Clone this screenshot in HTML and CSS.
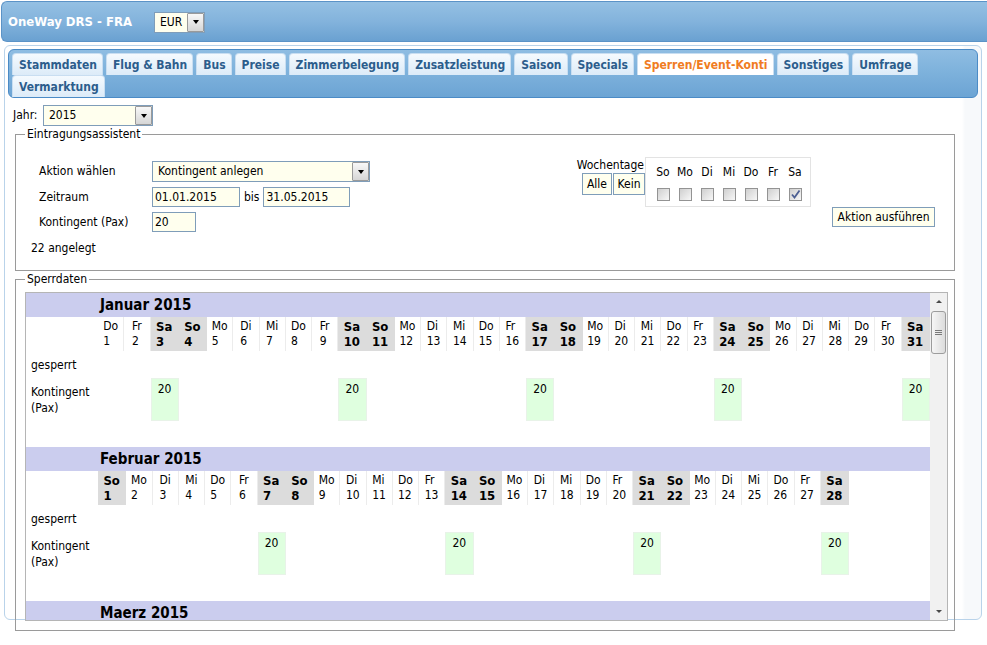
FILE: index.html
```html
<!DOCTYPE html>
<html lang="de">
<head>
<meta charset="utf-8">
<title>OneWay DRS - FRA</title>
<link rel="stylesheet" href="styles.css">
</head>
<body>
<header class="topbar">
  <span class="brand">OneWay DRS - FRA</span>
  <div class="select sel-eur"><span class="sel-val">EUR</span><span class="sel-btn"><i class="arrow"></i></span></div>
</header>
<main class="panel">
  <nav class="tabs">
    <a class="tab">Stammdaten</a>
    <a class="tab">Flug &amp; Bahn</a>
    <a class="tab">Bus</a>
    <a class="tab">Preise</a>
    <a class="tab">Zimmerbelegung</a>
    <a class="tab">Zusatzleistung</a>
    <a class="tab">Saison</a>
    <a class="tab">Specials</a>
    <a class="tab active">Sperren/Event-Konti</a>
    <a class="tab">Sonstiges</a>
    <a class="tab">Umfrage</a>
    <a class="tab">Vermarktung</a>
  </nav>

  <div class="year-row">
    <span class="year-lbl">Jahr:</span>
    <div class="select sel-year"><span class="sel-val">2015</span><span class="sel-btn"><i class="arrow"></i></span></div>
  </div>

  <fieldset class="box assistant">
    <legend>Eintragungsassistent</legend>
    <div class="assist-body">
      <div class="form">
        <span class="f-lbl">Aktion wählen</span>
        <div class="select sel-action"><span class="sel-val">Kontingent anlegen</span><span class="sel-btn"><i class="arrow"></i></span></div>
        <span class="f-lbl">Zeitraum</span>
        <div class="range">
          <span class="inp w-date">01.01.2015</span>
          <span>bis</span>
          <span class="inp w-date2">31.05.2015</span>
        </div>
        <span class="f-lbl">Kontingent (Pax)</span>
        <div><span class="inp w-pax">20</span></div>
      </div>
      <div class="assist-right">
        <div class="wd-lblcol">
          <span class="wd-title">Wochentage</span>
          <div class="wd-btns"><span class="btn b-alle">Alle</span><span class="btn b-kein">Kein</span></div>
        </div>
        <div class="wd-box">
          <span>So</span><span>Mo</span><span>Di</span><span>Mi</span><span>Do</span><span>Fr</span><span>Sa</span>
          <span class="cb"></span><span class="cb"></span><span class="cb"></span><span class="cb"></span><span class="cb"></span><span class="cb"></span>
          <span class="cb checked"><svg width="11" height="11" viewBox="0 0 11 11"><path d="M2 5.5 L4.5 8.5 L9.5 1.5" fill="none" stroke="#4b5e92" stroke-width="1.8"/></svg></span>
        </div>
        <span class="btn b-action">Aktion ausführen</span>
      </div>
    </div>
    <div class="count">22 angelegt</div>
  </fieldset>

  <fieldset class="box sperr">
    <legend>Sperrdaten</legend>
    <div class="scroller">
      <div class="months">
        <section class="month">
          <div class="month-title">Januar 2015</div>
          <div class="month-grid m-jan">
            <div class="lbl"></div>
            <div class="d">Do<br>1</div><div class="d">Fr<br>2</div><div class="d we">Sa<br>3</div><div class="d we">So<br>4</div>
            <div class="d">Mo<br>5</div><div class="d">Di<br>6</div><div class="d">Mi<br>7</div><div class="d">Do<br>8</div><div class="d">Fr<br>9</div>
            <div class="d we">Sa<br>10</div><div class="d we">So<br>11</div>
            <div class="d">Mo<br>12</div><div class="d">Di<br>13</div><div class="d">Mi<br>14</div><div class="d">Do<br>15</div><div class="d">Fr<br>16</div>
            <div class="d we">Sa<br>17</div><div class="d we">So<br>18</div>
            <div class="d">Mo<br>19</div><div class="d">Di<br>20</div><div class="d">Mi<br>21</div><div class="d">Do<br>22</div><div class="d">Fr<br>23</div>
            <div class="d we">Sa<br>24</div><div class="d we">So<br>25</div>
            <div class="d">Mo<br>26</div><div class="d">Di<br>27</div><div class="d">Mi<br>28</div><div class="d">Do<br>29</div><div class="d">Fr<br>30</div>
            <div class="d we">Sa<br>31</div>
            <div class="lbl">gesperrt</div>
            <div class="lbl">Kontingent (Pax)</div>
            <i></i><i></i><div class="k">20</div>
            <i></i><i></i><i></i><i></i><i></i><i></i><div class="k">20</div>
            <i></i><i></i><i></i><i></i><i></i><i></i><div class="k">20</div>
            <i></i><i></i><i></i><i></i><i></i><i></i><div class="k">20</div>
            <i></i><i></i><i></i><i></i><i></i><i></i><div class="k">20</div>
          </div>
        </section>
        <section class="month">
          <div class="month-title">Februar 2015</div>
          <div class="month-grid m-feb">
            <div class="lbl"></div>
            <div class="d we">So<br>1</div>
            <div class="d">Mo<br>2</div><div class="d">Di<br>3</div><div class="d">Mi<br>4</div><div class="d">Do<br>5</div><div class="d">Fr<br>6</div>
            <div class="d we">Sa<br>7</div><div class="d we">So<br>8</div>
            <div class="d">Mo<br>9</div><div class="d">Di<br>10</div><div class="d">Mi<br>11</div><div class="d">Do<br>12</div><div class="d">Fr<br>13</div>
            <div class="d we">Sa<br>14</div><div class="d we">So<br>15</div>
            <div class="d">Mo<br>16</div><div class="d">Di<br>17</div><div class="d">Mi<br>18</div><div class="d">Do<br>19</div><div class="d">Fr<br>20</div>
            <div class="d we">Sa<br>21</div><div class="d we">So<br>22</div>
            <div class="d">Mo<br>23</div><div class="d">Di<br>24</div><div class="d">Mi<br>25</div><div class="d">Do<br>26</div><div class="d">Fr<br>27</div>
            <div class="d we">Sa<br>28</div>
            <div class="lbl">gesperrt</div>
            <div class="lbl">Kontingent (Pax)</div>
            <i></i><i></i><i></i><i></i><i></i><i></i><div class="k">20</div>
            <i></i><i></i><i></i><i></i><i></i><i></i><div class="k">20</div>
            <i></i><i></i><i></i><i></i><i></i><i></i><div class="k">20</div>
            <i></i><i></i><i></i><i></i><i></i><i></i><div class="k">20</div>
          </div>
        </section>
        <section class="month">
          <div class="month-title">Maerz 2015</div>
        </section>
      </div>
      <div class="vscroll">
        <span class="sb-btn"><i class="tri-up"></i></span>
        <span class="sb-thumb"><i class="grip"></i></span>
        <span class="sb-track"></span>
        <span class="sb-btn"><i class="tri-down"></i></span>
      </div>
    </div>
  </fieldset>
</main>
</body>
</html>
```

FILE: styles.css
```css
* { box-sizing: border-box; }
html, body { margin: 0; padding: 0; }
body {
  width: 987px;
  height: 645px;
  overflow: hidden;
  background: #fff;
  color: #000;
  font-family: "DejaVu Sans Condensed", "DejaVu Sans", sans-serif;
  font-stretch: semi-condensed;
  font-size: 12px;
  line-height: 15px;
}

/* ---------- top bar ---------- */
.topbar {
  display: flex;
  align-items: center;
  height: 41px;
  margin: 1px 0 0 1px;
  padding-left: 6px;
  border: 1px solid #5b93c7;
  border-right: 0;
  border-radius: 6px 0 0 6px;
  background: linear-gradient(#94c0e3, #83b3dc 50%, #6aa1d1);
}
.brand {
  color: #fff;
  font-weight: bold;
  font-size: 13px;
  margin-right: 22px;
}

/* ---------- select boxes ---------- */
.select {
  display: inline-flex;
  align-items: stretch;
  height: 21px;
  border: 1px solid #7f9db9;
  background: #ffffee;
}
.sel-val {
  flex: 1;
  padding-left: 5px;
  line-height: 19px;
  white-space: nowrap;
}
.sel-btn {
  width: 17px;
  border: 1px solid #9a9a9a;
  border-radius: 1px;
  background: linear-gradient(#f8f8f8, #d6d6d6);
  display: flex;
  align-items: center;
  justify-content: center;
}
.arrow {
  width: 0;
  height: 0;
  border-left: 3.5px solid transparent;
  border-right: 3.5px solid transparent;
  border-top: 4px solid #000;
}
.sel-eur { width: 51px; height: 21px; margin-top: 1px; }
.sel-year { width: 110px; }
.sel-action { width: 218px; }

/* ---------- panel & tabs ---------- */
.panel {
  display: block;
  margin: 3px 0 0 4px;
  width: 978px;
  height: 575px;
  padding: 3px;
  border: 1px solid #b9d3ea;
  border-radius: 6px;
  background: linear-gradient(to right, #fff 957px, #f7f9fb 960px);
}
.tabs {
  display: flex;
  flex-wrap: wrap;
  align-content: flex-start;
  column-gap: 3px;
  height: 49px;
  padding: 3px 3px 0;
  border: 1px solid #4b8bc6;
  border-radius: 6px;
  background: linear-gradient(#8fbde2, #7eb2dc 45%, #6ca4d4);
}
.tab {
  height: 22px;
  padding: 0 5px 0 6px;
  border: 1px solid #c9def1;
  border-bottom: 0;
  border-radius: 4px 4px 0 0;
  background: linear-gradient(#f5fafe, #dcebf8);
  color: #2c5d8c;
  font-weight: bold;
  font-size: 12px;
  line-height: 22px;
  white-space: nowrap;
}
.tab.active {
  background: #fff;
  color: #f07c22;
}

/* ---------- year row ---------- */
.year-row {
  display: flex;
  align-items: center;
  margin: 7px 0 0 5px;
}
.year-lbl { width: 30px; }

/* ---------- fieldsets ---------- */
.box {
  display: block;
  margin: 1px 0 0 7px;
  width: 940px;
  padding: 0;
  border: 1px solid #9a9a9a;
  min-width: 0;
}
.box legend {
  margin-left: 9px;
  padding: 0 2px;
  line-height: 15px;
}

.assist-body {
  display: flex;
  align-items: flex-start;
  padding: 15px 19px 0 23px;
}
.form {
  display: grid;
  grid-template-columns: 113px auto;
  row-gap: 5px;
  align-items: center;
  margin-top: 4px;
}
.range {
  display: flex;
  align-items: center;
  gap: 4px;
}
.inp {
  display: inline-block;
  height: 20px;
  padding: 0 2px;
  border: 1px solid #7f9db9;
  background: #ffffee;
  line-height: 18px;
}
.w-date { width: 88px; }
.w-date2 { width: 87px; }
.w-pax { width: 44px; }
.count {
  margin: 9px 0 14px 15px;
}

.assist-right {
  margin-left: auto;
  display: flex;
  align-items: flex-start;
}
.wd-lblcol {
  width: 71px;
  padding-top: 1px;
  display: flex;
  flex-direction: column;
  align-items: flex-end;
}
.wd-title { white-space: nowrap; margin-right: 1px; }
.wd-btns { display: flex; gap: 1px; }
.btn {
  display: inline-block;
  height: 22px;
  border: 1px solid #7f9db9;
  background: #ffffee;
  line-height: 20px;
  text-align: center;
  white-space: nowrap;
}
.b-alle { width: 30px; }
.b-kein { width: 32px; }
.wd-box {
  display: grid;
  grid-template-columns: repeat(7, 22px);
  justify-items: center;
  width: 166px;
  height: 50px;
  padding: 7px 4px 0 6px;
  border: 1px solid #e3e3e3;
}
.cb {
  display: flex;
  align-items: center;
  justify-content: center;
  width: 13px;
  height: 13px;
  margin-top: 3px;
  border: 1px solid #939393;
  background: linear-gradient(135deg, #cfcfcf, #f7f7f7);
}
.b-action {
  width: 103px;
  height: 20px;
  line-height: 18px;
  margin: 50px 0 0 21px;
}

/* ---------- Sperrdaten ---------- */
.scroller {
  display: flex;
  width: 923px;
  height: 329px;
  margin: 5px 0 9px 9px;
  border: 1px solid #b5b5b5;
}
.months {
  width: 904px;
  overflow: hidden;
}
.month-title {
  height: 24px;
  padding-left: 74px;
  background: #cbcdee;
  font-weight: bold;
  font-size: 15px;
  line-height: 24px;
}
.month-grid {
  display: grid;
  grid-template-rows: 34px 27px 43px;
  margin-bottom: 26px;
}
.m-jan { grid-template-columns: 72px 26.25px 26.25px repeat(4, 28.25px 28.25px 26.25px 26.25px 26.25px 26.25px 26.25px) 28.25px; }
.m-feb { grid-template-columns: 72px 28.25px repeat(3, 26.25px 26.25px 26.25px 26.25px 26.25px 28.25px 28.25px) 26.25px 26.25px 26.25px 26.25px 26.25px 28.25px; }

.lbl {
  grid-column: 1;
  display: flex;
  align-items: center;
  padding-left: 5px;
  line-height: 16px;
}
.d {
  display: flex;
  flex-direction: column;
  justify-content: center;
  align-items: center;
  background: #fff;
  border-right: 1px solid #ececec;
  line-height: 15px;
  white-space: nowrap;
}
.d.we {
  background: #dcdcdc;
  border-right-color: #dcdcdc;
  font-weight: bold;
  font-size: 13px;
}
.k {
  background: #dfffdf;
  border: 1px solid #e8f3e8;
  text-align: center;
  padding-top: 3px;
}

/* scrollbar */
.vscroll {
  width: 17px;
  display: flex;
  flex-direction: column;
  background: #f1f1f1;
}
.sb-btn {
  height: 17px;
  display: flex;
  align-items: center;
  justify-content: center;
}
.tri-up, .tri-down {
  width: 0;
  height: 0;
  border-left: 3px solid transparent;
  border-right: 3px solid transparent;
}
.tri-up { border-bottom: 3px solid #4a4a4a; }
.tri-down { border-top: 3px solid #4a4a4a; }
.sb-thumb {
  height: 43px;
  margin: 1px 1px 0;
  border: 1px solid #9c9c9c;
  border-radius: 3px;
  background: linear-gradient(to right, #f6f6f6, #dcdcdc);
  display: flex;
  align-items: center;
  justify-content: center;
}
.grip {
  width: 7px;
  height: 5px;
  border-top: 1px solid #7a7a7a;
  border-bottom: 1px solid #7a7a7a;
  background: linear-gradient(transparent 1px, #7a7a7a 1px, #7a7a7a 2px, transparent 2px);
}
.sb-track { flex: 1; }
```
